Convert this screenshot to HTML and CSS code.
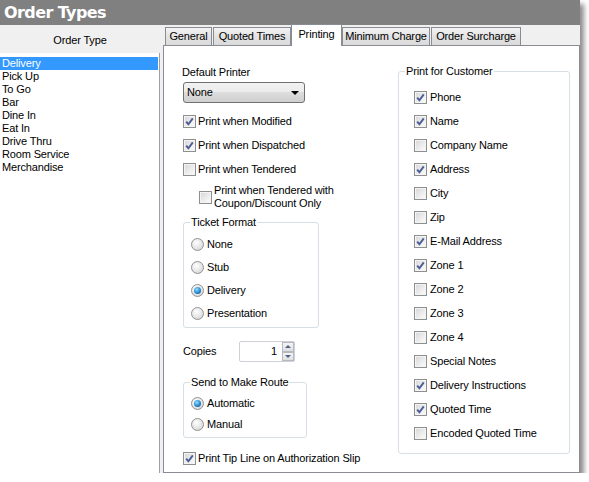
FILE: index.html
```html
<!DOCTYPE html>
<html>
<head>
<meta charset="utf-8">
<link rel="stylesheet" href="styles.css">
</head>
<body>
<div class="window">
  <div class="titlebar">Order Types</div>
  <div class="main">
    <div class="left">
      <div class="left-head">Order Type</div>
      <ul class="list">
        <li class="sel">Delivery</li>
        <li>Pick Up</li>
        <li>To Go</li>
        <li>Bar</li>
        <li>Dine In</li>
        <li>Eat In</li>
        <li>Drive Thru</li>
        <li>Room Service</li>
        <li>Merchandise</li>
      </ul>
    </div>
    <div class="right">
      <div class="tabs">
        <div class="tab t-general">General</div>
        <div class="tab t-quoted">Quoted Times</div>
        <div class="tab t-printing active">Printing</div>
        <div class="tab t-min">Minimum Charge</div>
        <div class="tab t-sur">Order Surcharge</div>
      </div>
      <div class="panel">
        <div class="col-l">
          <div class="label">Default Printer</div>
          <div class="combo"><span class="combo-text">None</span><span class="arrow"></span></div>
          <div class="checks">
            <label class="row"><span class="cb on"><svg viewBox="0 0 11 11"><path d="M2.2 5.6 L4.4 8.2 L8.8 2.4"/></svg></span>Print when Modified</label>
            <label class="row"><span class="cb on"><svg viewBox="0 0 11 11"><path d="M2.2 5.6 L4.4 8.2 L8.8 2.4"/></svg></span>Print when Dispatched</label>
            <label class="row"><span class="cb"></span>Print when Tendered</label>
            <label class="row sub"><span class="cb"></span><span class="two">Print when Tendered with<br>Coupon/Discount Only</span></label>
          </div>
          <fieldset class="group ticket">
            <legend>Ticket Format</legend>
            <label class="rrow"><span class="rb"></span>None</label>
            <label class="rrow"><span class="rb"></span>Stub</label>
            <label class="rrow"><span class="rb on"></span>Delivery</label>
            <label class="rrow"><span class="rb"></span>Presentation</label>
          </fieldset>
          <div class="copies">
            <span class="copies-label">Copies</span>
            <div class="spin">
              <span class="spin-val">1</span>
              <span class="spin-btns"><span class="sb up"></span><span class="sb down"></span></span>
            </div>
          </div>
          <fieldset class="group route">
            <legend>Send to Make Route</legend>
            <label class="rrow2"><span class="rb on"></span>Automatic</label>
            <label class="rrow2"><span class="rb"></span>Manual</label>
          </fieldset>
          <label class="row tip"><span class="cb on"><svg viewBox="0 0 11 11"><path d="M2.2 5.6 L4.4 8.2 L8.8 2.4"/></svg></span>Print Tip Line on Authorization Slip</label>
        </div>
        <fieldset class="group cust">
          <legend>Print for Customer</legend>
          <label class="row"><span class="cb on"><svg viewBox="0 0 11 11"><path d="M2.2 5.6 L4.4 8.2 L8.8 2.4"/></svg></span>Phone</label>
          <label class="row"><span class="cb on"><svg viewBox="0 0 11 11"><path d="M2.2 5.6 L4.4 8.2 L8.8 2.4"/></svg></span>Name</label>
          <label class="row"><span class="cb"></span>Company Name</label>
          <label class="row"><span class="cb on"><svg viewBox="0 0 11 11"><path d="M2.2 5.6 L4.4 8.2 L8.8 2.4"/></svg></span>Address</label>
          <label class="row"><span class="cb"></span>City</label>
          <label class="row"><span class="cb"></span>Zip</label>
          <label class="row"><span class="cb on"><svg viewBox="0 0 11 11"><path d="M2.2 5.6 L4.4 8.2 L8.8 2.4"/></svg></span>E-Mail Address</label>
          <label class="row"><span class="cb on"><svg viewBox="0 0 11 11"><path d="M2.2 5.6 L4.4 8.2 L8.8 2.4"/></svg></span>Zone 1</label>
          <label class="row"><span class="cb"></span>Zone 2</label>
          <label class="row"><span class="cb"></span>Zone 3</label>
          <label class="row"><span class="cb"></span>Zone 4</label>
          <label class="row"><span class="cb"></span>Special Notes</label>
          <label class="row"><span class="cb on"><svg viewBox="0 0 11 11"><path d="M2.2 5.6 L4.4 8.2 L8.8 2.4"/></svg></span>Delivery Instructions</label>
          <label class="row"><span class="cb on"><svg viewBox="0 0 11 11"><path d="M2.2 5.6 L4.4 8.2 L8.8 2.4"/></svg></span>Quoted Time</label>
          <label class="row"><span class="cb"></span>Encoded Quoted Time</label>
        </fieldset>
      </div>
    </div>
  </div>
</div>
</body>
</html>
```

FILE: styles.css
```css
* { box-sizing: border-box; }
html, body { margin: 0; padding: 0; background: #fff; }
body {
  font-family: "Liberation Sans", Arial, sans-serif;
  font-size: 11px;
  line-height: 13px;
  letter-spacing: -0.15px;
  color: #000;
}
.window {
  width: 580px;
  height: 473px;
  display: flex;
  flex-direction: column;
  background: #f0f0f0;
  box-shadow: 4px 4px 5px rgba(0,0,0,0.45);
}
.titlebar {
  height: 25px;
  background: #808080;
  color: #fff;
  font-family: "DejaVu Sans", sans-serif;
  font-weight: bold;
  font-size: 16px;
  line-height: 25px;
  padding-left: 4px;
  letter-spacing: -0.6px;
}
.main { flex: 1; display: flex; min-height: 0; }
.left { width: 160px; display: flex; flex-direction: column; }
.left-head {
  height: 28px;
  padding-top: 9px;
  text-align: center;
}
.list {
  flex: 1;
  margin: 0;
  padding: 4px 0 0 0;
  list-style: none;
  background: #fff;
  border-right: 1px solid #a0a0a0;
}
.list li { height: 13px; padding-left: 2px; }
.list li.sel { background: #3399ff; color: #fff; margin-right: 1px; }

.right { flex: 1; margin-left: 3px; display: flex; flex-direction: column; }
.tabs {
  height: 21px;
  display: flex;
  align-items: flex-end;
  padding-left: 2px;
}
.tab {
  height: 18px;
  margin-bottom: 1px;
  border: 1px solid #898c95;
  border-bottom: none;
  background: linear-gradient(#f3f3f3, #e3e3e3 50%, #dadada);
  text-align: center;
  line-height: 16px;
}
.t-general { width: 47px; }
.t-quoted { width: 78px; margin-left: 1px; }
.t-printing { width: 51px; }
.t-min { width: 88px; }
.t-sur { width: 90px; margin-left: 1px; }
.tab.active {
  height: 22px;
  margin-bottom: 0;
  background: #fff;
  position: relative;
  z-index: 1;
  line-height: 18px;
}
.panel {
  flex: 1;
  margin-top: -1px;
  background: #fff;
  border: 1px solid #898c95;
  display: flex;
  padding: 20px 0 0 19px;
}
.col-l { width: 215px; display: flex; flex-direction: column; align-items: flex-start; }
.label { height: 13px; margin-left: -1px; }
.combo {
  margin-top: 3px;
  width: 122px;
  height: 21px;
  border: 1px solid #707070;
  border-radius: 3px;
  background: linear-gradient(#f2f2f2, #ebebeb 50%, #dddddd 50%, #cfcfcf);
  display: flex;
  align-items: center;
  padding: 0 4px 0 3px;
}
.combo-text { flex: 1; }
.arrow {
  width: 0; height: 0;
  border-left: 4px solid transparent;
  border-right: 4px solid transparent;
  border-top: 4px solid #000;
  margin-right: 1px;
}
.checks { margin-top: 6px; display: flex; flex-direction: column; }
.row {
  display: flex;
  align-items: center;
  height: 24px;
  gap: 2px;
  white-space: nowrap;
}
.cb {
  width: 13px; height: 13px;
  flex: none;
  border: 1px solid #8e8f8f;
  background: linear-gradient(135deg, #d6d6d6, #f6f6f6 80%);
  box-shadow: inset 0 0 0 1px #f4f4f4;
  display: flex;
  align-items: center;
  justify-content: center;
}
.cb svg { width: 11px; height: 11px; }
.cb svg path { fill: none; stroke: #4a5d96; stroke-width: 1.9; }
.row.sub { height: 26px; margin-left: 16px; margin-top: 3px; }
.two { line-height: 13px; }

.group {
  margin: 0;
  border: 1px solid #d5dfe5;
  border-radius: 3px;
  min-width: 0;
}
.group legend { padding: 0 1px; margin-left: -1px; line-height: 13px; }
.ticket { width: 136px; margin-top: 6px; padding: 4px 0 2px 7px; }
.rrow, .rrow2 { display: flex; align-items: center; gap: 3px; height: 23px; }
.rrow2 { height: 21px; }
.rb {
  width: 13px; height: 13px;
  flex: none;
  border: 1px solid #929292;
  border-radius: 50%;
  background: radial-gradient(circle at 40% 35%, #ffffff, #e2e2e2 60%, #c8c8c8);
  display: flex;
  align-items: center;
  justify-content: center;
}
.rb.on::after {
  content: "";
  width: 7px; height: 7px;
  border-radius: 50%;
  background: radial-gradient(circle at 40% 35%, #9ee0ff, #2b8fd6 50%, #0d4f86);
}
.copies { margin-top: 13px; height: 21px; display: flex; align-items: center; }
.copies-label { width: 56px; }
.spin {
  width: 56px; height: 21px;
  border: 1px solid #cdd1d7;
  border-radius: 2px;
  display: flex;
}
.spin-val { flex: 1; text-align: right; padding-right: 5px; line-height: 19px; }
.spin-btns { width: 12px; display: flex; flex-direction: column; }
.sb {
  flex: 1;
  border: 1px solid #b6b9c0;
  background: linear-gradient(#f5f5f5, #dedede);
  display: flex;
  align-items: center;
  justify-content: center;
}
.sb.up::after {
  content: ""; width: 0; height: 0;
  border-left: 3px solid transparent;
  border-right: 3px solid transparent;
  border-bottom: 3px solid #4d6185;
}
.sb.down::after {
  content: ""; width: 0; height: 0;
  border-left: 3px solid transparent;
  border-right: 3px solid transparent;
  border-top: 3px solid #4d6185;
}
.route { width: 124px; margin-top: 14px; padding: 4px 0 2px 7px; }
.row.tip { margin-top: 8px; }
.cust {
  width: 172px;
  align-self: flex-start;
  margin-top: -1px;
  padding: 7px 0 8px 15px;
}
.cust legend { margin-left: -9px; }
.cust .row { gap: 3px; }
```
